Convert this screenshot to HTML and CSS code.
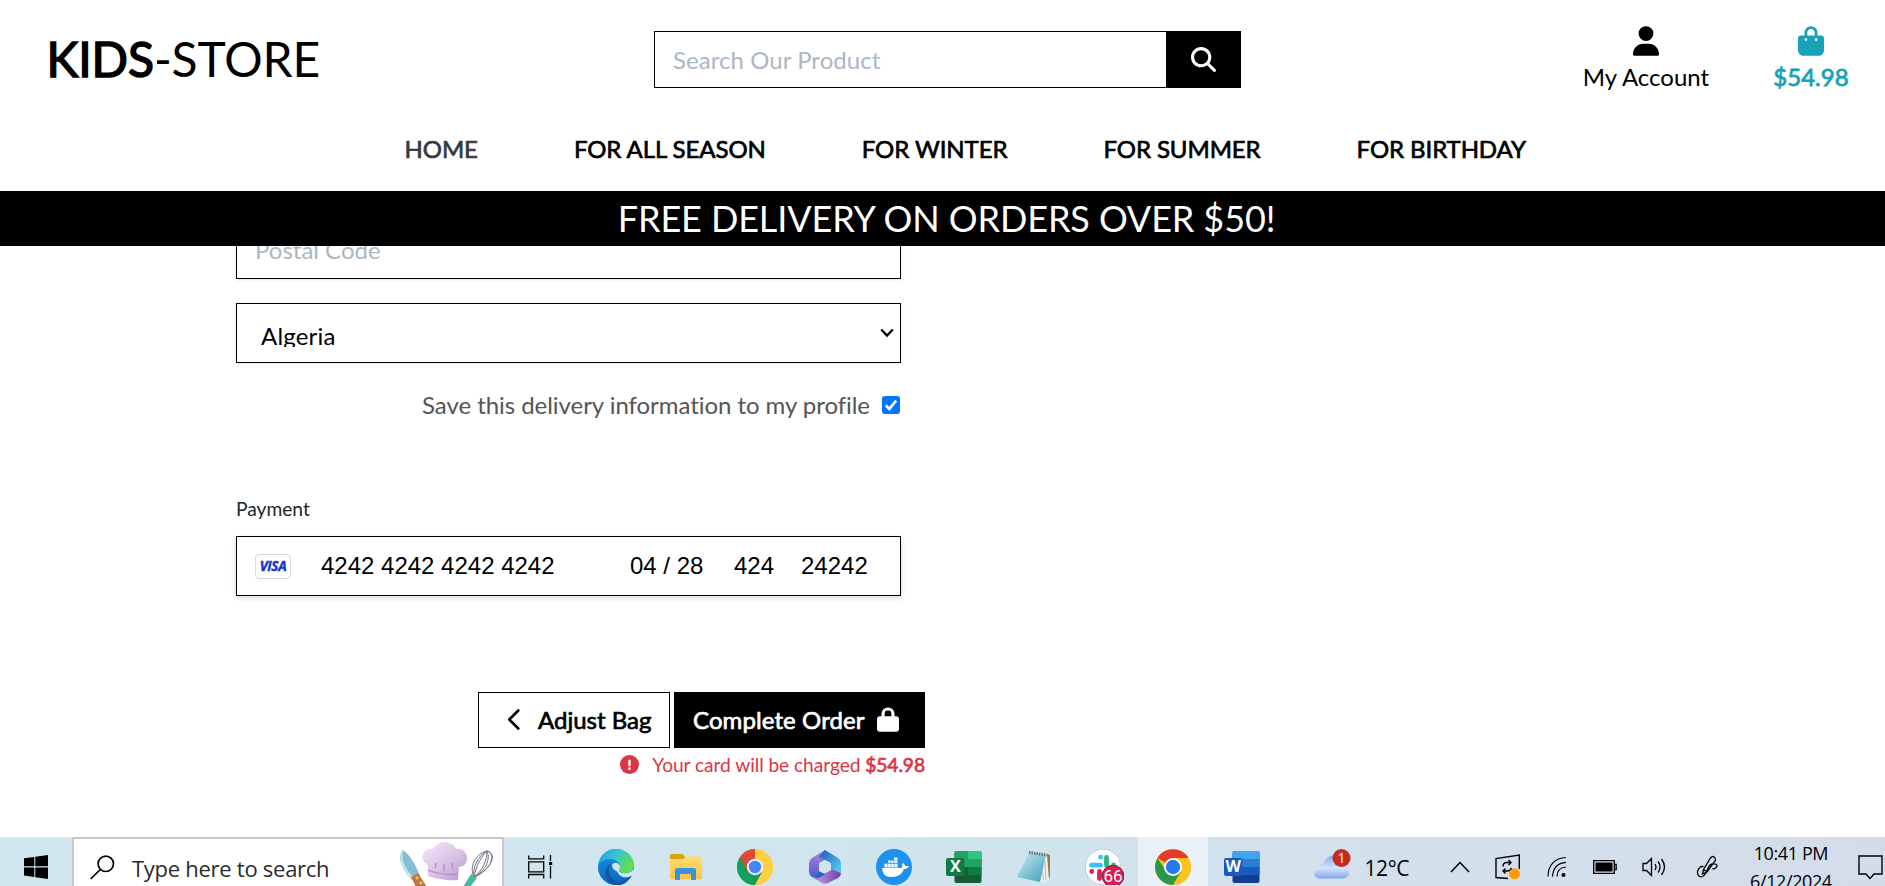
FILE: index.html
```html
<!DOCTYPE html>
<html lang="en">
<head>
<meta charset="utf-8">
<title>KIDS-STORE Checkout</title>
<link rel="stylesheet" href="styles.css">
</head>
<body>
<svg class="defs" width="0" height="0" aria-hidden="true">
  <defs>
    <linearGradient id="edgeTop" x1="0" y1="0" x2="1" y2="0.4"><stop offset="0" stop-color="#1b9de2"/><stop offset=".5" stop-color="#35c3dc"/><stop offset="1" stop-color="#62dd4f"/></linearGradient>
    <linearGradient id="edgeLow" x1="0" y1="0" x2="0" y2="1"><stop offset="0" stop-color="#1596e3"/><stop offset="1" stop-color="#0a64bd"/></linearGradient>
    <linearGradient id="folder" x1="0" y1="0" x2="0" y2="1"><stop offset="0" stop-color="#ffdc6e"/><stop offset="1" stop-color="#fbc546"/></linearGradient>
    <linearGradient id="mA" x1="0" y1="0" x2="0" y2="1"><stop offset="0" stop-color="#ae7fe0"/><stop offset="1" stop-color="#4a5cc4"/></linearGradient>
    <linearGradient id="mB" x1="0" y1="0" x2="1" y2="1"><stop offset="0" stop-color="#2458b4"/><stop offset="1" stop-color="#54d6f8"/></linearGradient>
    <linearGradient id="mC" x1="0" y1="0" x2="1" y2="0"><stop offset="0" stop-color="#d09bf4"/><stop offset="1" stop-color="#7044a0"/></linearGradient>
    <linearGradient id="note" x1="0" y1="0" x2="1" y2="1"><stop offset="0" stop-color="#c9edf3"/><stop offset="1" stop-color="#3f9fb5"/></linearGradient>
    <linearGradient id="hat" x1="0" y1="0" x2="1" y2="1"><stop offset="0" stop-color="#f3e8f8"/><stop offset=".55" stop-color="#d9c2e6"/><stop offset="1" stop-color="#b794cc"/></linearGradient>
    <linearGradient id="cloud" x1="0" y1="0" x2="0" y2="1"><stop offset="0" stop-color="#86acef"/><stop offset=".55" stop-color="#d2e4fb"/><stop offset="1" stop-color="#7fa5ec"/></linearGradient>
  </defs>
</svg>

<div class="page">
  <header class="header">
    <div class="top-row">
      <a class="brand"><span class="strong">KIDS</span>-STORE</a>
      <form class="search">
        <div class="search-input"><span>Search Our Product</span></div>
        <div class="search-button">
          <svg width="25" height="25" viewBox="0 0 512 512"><path fill="#fff" d="M416 208c0 45.900-14.900 88.300-40 122.700L502.600 457.400c12.500 12.500 12.500 32.800 0 45.300s-32.800 12.500-45.300 0L330.700 376c-34.400 25.200-76.800 40-122.700 40C93.100 416 0 322.900 0 208S93.100 0 208 0s208 93.100 208 208zM208 352a144 144 0 1 0 0-288 144 144 0 1 0 0 288z"/></svg>
        </div>
      </form>
      <div class="account">
        <svg width="26" height="30" viewBox="0 0 448 512"><path d="M224 256A128 128 0 1 0 224 0a128 128 0 1 0 0 256zm-45.700 48C79.800 304 0 383.800 0 482.300 0 498.700 13.300 512 29.700 512h388.600c16.400 0 29.700-13.300 29.700-29.700C448 383.800 368.200 304 269.700 304z"/></svg>
        <span class="account-label">My Account</span>
      </div>
      <div class="bag">
        <svg width="26" height="30" viewBox="0 0 448 512"><path fill="#17a2b8" d="M160 112c0-35.300 28.700-64 64-64s64 28.700 64 64v48H160zm-48 48H48c-26.500 0-48 21.500-48 48v208c0 53 43 96 96 96h256c53 0 96-43 96-96V208c0-26.500-21.500-48-48-48h-64v-48C336 50.100 285.900 0 224 0S112 50.100 112 112zm24 48a24 24 0 1 1 0 48 24 24 0 1 1 0-48zm152 24a24 24 0 1 1 48 0 24 24 0 1 1-48 0z"/></svg>
        <span class="bag-total">$54.98</span>
      </div>
    </div>
    <nav class="nav">
      <a class="nav-link current">HOME</a>
      <a class="nav-link">FOR ALL SEASON</a>
      <a class="nav-link">FOR WINTER</a>
      <a class="nav-link">FOR SUMMER</a>
      <a class="nav-link">FOR BIRTHDAY</a>
    </nav>
  </header>
  <div class="banner"><span>FREE DELIVERY ON ORDERS OVER $50!</span></div>

  <main class="checkout">
    <div class="form">
      <div class="field postal"><span>Postal Code</span></div>
      <div class="field country">
        <span class="country-name">Algeria</span>
        <svg width="14" height="10" viewBox="0 0 14 10"><path d="M1.200 1.500 7 7.500l5.800-6" fill="none" stroke="#000" stroke-width="2.300"/></svg>
      </div>
      <div class="save">
        <span class="save-label">Save this delivery information to my profile</span>
        <svg width="18" height="18" viewBox="0 0 18 18"><rect width="18" height="18" rx="3" fill="#0075ff"/><path d="M3.800 9.300 7.300 12.900 14.200 4.600" fill="none" stroke="#fff" stroke-width="2.700"/></svg>
      </div>
      <div class="legend">Payment</div>
      <div class="field card">
        <div class="visa">VISA</div>
        <span class="card-number">4242 4242 4242 4242</span>
        <span class="card-expiry">04 / 28</span>
        <span class="card-cvc">424</span>
        <span class="card-zip">24242</span>
      </div>
    </div>
    <div class="actions">
      <div class="buttons">
        <a class="btn btn-light">
          <svg width="13" height="21" viewBox="0 0 13 21"><path d="M11.300 1.500 2.300 10.500l9 9" fill="none" stroke="#000" stroke-width="2.600" stroke-linecap="round" stroke-linejoin="round"/></svg>
          <span class="adjust-label">Adjust Bag</span>
        </a>
        <a class="btn btn-dark">
          <span class="complete-label">Complete Order</span>
          <svg width="22" height="25" viewBox="0 0 22 25"><path d="M6 10V7a5 5 0 0 1 10 0v3" fill="none" stroke="#fff" stroke-width="3.200"/><rect y="9.200" width="22" height="15.600" rx="3" fill="#fff"/></svg>
        </a>
      </div>
      <div class="charge">
        <svg width="19" height="19" viewBox="0 0 19 19"><circle cx="9.500" cy="9.500" r="9.500" fill="#dc3545"/><path d="M9.500 5.800v4.200" stroke="#fff" stroke-width="2.400" stroke-linecap="round"/><circle cx="9.500" cy="13.700" r="1.350" fill="#fff"/></svg>
        <span class="charge-text">Your card will be charged <span class="strong-sm">$54.98</span></span>
      </div>
    </div>
  </main>

  <footer class="taskbar">
    <div class="start">
      <svg width="24" height="24" viewBox="0 0 24 24"><path d="M0 3.300 10.300 1.900v9.400H0zM11.300 1.700 24 0v11.300H11.300zM0 12.400h10.300v9.500L0 20.500zM11.300 12.400H24V24l-12.700-1.800z"/></svg>
    </div>
    <div class="task-search">
      <svg class="lens" width="25" height="25" viewBox="0 0 25 25"><circle cx="15.800" cy="8.800" r="7.700" fill="none" stroke="#000" stroke-width="1.700"/><path d="M10.300 14.500.7 24" stroke="#000" stroke-width="1.700"/></svg>
      <span class="task-search-text">Type here to search</span>
      <svg class="art" width="98" height="46" viewBox="0 0 98 46">
        <path d="M7 9c6 4 12 13 17 26l-8 4C7 29 0 17 7 9z" fill="#86bfd4"/><path d="M7 9C2 16 4 27 15 38l3-1C8 27 5 18 7 9z" fill="#c0e6f0"/>
        <path d="m15 36 7-4 9 14H20z" fill="#bd7849"/><circle cx="21" cy="37" r="1.400" fill="#f5c84c"/><circle cx="25" cy="42" r="1.400" fill="#f5c84c"/>
        <path d="M32 29c0-2 0-4-1-6-5-2-6-8-3-12 2-3 6-4 9-3 4-9 20-9 23 0 7-1 11 4 11 9 0 6-4 9-8 9l-1 13c-10 1-21-1-30-4z" fill="url(#hat)"/>
        <path d="M32 29c9 4 18 5 30 4M40 22l-1 5m9-4v7m8-8 1 6" fill="none" stroke="#b18cc8" stroke-width="1.300"/>
        <g fill="none" stroke="#77727f" stroke-width="1"><path d="M78 36c-5-10 1-23 13-26 8 1 7 18-13 26z"/><path d="M78 36c-2-10 5-22 13-26 4 9-2 20-13 26z"/><path d="M78 36c2-11 7-20 13-26 0 10-5 20-13 26zM78 36C84 34 99 23 96 14q-2-4-5-4"/></g>
        <path d="m75 33 6 4-7 9h-7z" fill="#4bb8a4"/>
      </svg>
    </div>
    <div class="task-view">
      <svg width="25" height="24" viewBox="0 0 25 24" fill="none" stroke="#000" stroke-width="1.300"><path d="M.7.500v3.400h15V.500M.7 6.900h15v10H.7zM.7 23.500v-4h15v4M22.500 0v6M22.500 11v12.500"/><path d="M21 7h3.200v3H21z" fill="#000" stroke="none"/></svg>
    </div>
    <div class="apps">
      <div class="app">
        <svg width="36" height="36" viewBox="0 0 36 36"><circle cx="18" cy="18" r="18" fill="url(#edgeLow)"/><path d="M22 23c4 2 9 2 14-3v5l-3 2c-5 3-13 1-14-6z" fill="#d2e6ef"/><path d="M0 17C2 6 9 0 18 0c11 0 18 8 18 16 0 7-8 10-14 7-2-1 0-2 0-5 0-5-5-8-10-8-6 0-10 3-12 7z" fill="url(#edgeTop)"/><path d="M14 14c-5 5-4 13 2 17 6 3 13 0 17-4-5 11-16 11-22 6-6-6-4-15 3-19z" fill="#0f56a4"/><path d="M22 23c-4 0-8-3-8-7 2-4 8-2 8 2 0 3-2 4 0 5z" fill="#d2e6ef"/></svg>
      </div>
      <div class="app">
        <svg width="32" height="36" viewBox="0 0 32 36"><path d="M0 6.500Q0 5 1.500 5h11L15 8v4H0z" fill="#dea107"/><path d="M0 10h13l3-2.500h14.500Q32 7.500 32 9v19.500q0 1.500-1.500 1.500h-29Q0 30 0 28.500z" fill="url(#folder)"/><path d="M5 31V21q0-2 2-2h17q2 0 2 2v10h-5v-6H10v6z" fill="#3895dd"/></svg>
      </div>
      <div class="app">
        <svg width="36" height="36" viewBox="0 0 36 36"><circle cx="18" cy="18" r="18" fill="#ffce44"/><path d="M18 18V0A18 18 0 0 0 2.400 9z" fill="#db4a3c"/><path d="M2.400 9A18 18 0 0 0 18 36l7-13-15-1z" fill="#12a05b"/><path d="M18 18 11 27 2.400 9 18 9z" fill="#db4a3c"/><path d="M3 8.500 11 23l7 13A18 18 0 0 1 3 8.500z" fill="#12a05b"/><path d="M18 36a18 18 0 0 0 0-36v9l8 14z" fill="#ffce44"/><circle cx="18" cy="18" r="8.200" fill="#e9eff5"/><circle cx="18" cy="18" r="6.200" fill="#4885f4"/></svg>
      </div>
      <div class="app">
        <svg width="32" height="36" viewBox="0 0 32 36"><path d="M16 1 3 9Q0 11 0 14v9q0 3 3 5l5 3q3-4 2-9v-8l11-6V5z" fill="url(#mA)"/><path d="M12 5l4-4 13 8q3 2 3 5v10l-10-3v-7L10 8z" fill="url(#mB)"/><path d="M3 28q6 1 9-3l10-5 10 4q0 3-3 5l-10 5q-3 1-6 0z" fill="url(#mC)"/><path d="m10 22 6 3.500-7 4-6-2q6 0 7-5.500z" fill="#2164b8"/><path d="m16 12.200 6 3v6L16 24.500l-6-3.300v-6z" fill="#d2e4ee"/></svg>
      </div>
      <div class="app">
        <svg width="36" height="36" viewBox="0 0 36 36"><circle cx="18" cy="18" r="18" fill="#1d91ed"/><path d="M6 19h19q2-1 1-4l1-1q2 1 2 3h4q-1 3-5 3-3 8-12 8-9 1-10-9z" fill="#fff"/><path d="M8.500 14.500h13v4h-13zM12 11.500h9.500v2.500H12zM18 8.500h3.500V11H18z" fill="#fff"/><path d="M11.700 11v8m3.200-8v8m3.200-8v8M8 14.200h14" stroke="#1d91ed" stroke-width=".6"/></svg>
      </div>
      <div class="app">
        <svg width="36" height="36" viewBox="0 0 36 36"><rect x="8.500" y="2" width="27" height="32" rx="2" fill="#185c37"/><path d="M8.500 4q0-2 2-2H22v8H8.500zM8.500 10H22v8H8.500z" fill="#21a366"/><path d="M22 2h11.500q2 0 2 2v6H22z" fill="#33c481"/><path d="M22 10h13.500v8H22z" fill="#21a366"/><path d="M22 18h13.500v8H22z" fill="#107c41"/><rect y="9" width="18.500" height="18" rx="2" fill="#107c41"/><text x="9.300" y="23" class="office">X</text></svg>
      </div>
      <div class="app">
        <svg width="34" height="36" viewBox="0 0 34 36"><path d="m30 5 3 1v22l-4 5z" fill="#a0793e"/><path d="m12 4 18 2 2 25-5 3-8-3z" fill="#eef1f1"/><path d="m12 4 17 2-6 27L0 28z" fill="url(#note)"/><path d="M12 3.500 30 6" stroke="#68737a" stroke-width="3" stroke-dasharray="1.500 1"/><path d="m28 12 1 19M25 21l2 11" stroke="#b6bdbe"/></svg>
      </div>
      <div class="app">
        <svg width="42" height="36" viewBox="0 0 42 36"><circle cx="21" cy="18" r="17.700" fill="#fff" stroke="#b8c0c8" stroke-width=".7"/><g fill="none" stroke-width="4.800" stroke-linecap="round"><path d="M9.500 16.200h9M18.500 8.200h.1" stroke="#36c5f0"/><path d="M24.500 8.500v8M31.500 16h.1" stroke="#2eb67d"/><path d="M17.500 22.500v7M9.800 22.500h.1" stroke="#e01e5a"/></g><circle cx="31" cy="27" r="10.800" fill="#d61f50" stroke="#76233f" stroke-width="1"/><text x="31" y="32.500" class="count">66</text></svg>
      </div>
      <div class="app active">
        <svg width="36" height="36" viewBox="0 0 36 36"><circle cx="18" cy="18" r="18" fill="#fcc31c"/><path d="M18 18 2.500 9a18 18 0 0 1 31 0z" fill="#e33b2e"/><path d="M2.500 9A18 18 0 0 0 18 36l8-13-15-1z" fill="#2d9748"/><path d="M18 36A18 18 0 0 0 33.500 9H18l8 14z" fill="#fcc31c"/><circle cx="18" cy="18" r="9" fill="#fff"/><circle cx="18" cy="18" r="7.200" fill="#2979ed"/></svg>
      </div>
      <div class="app">
        <svg width="36" height="36" viewBox="0 0 36 36"><rect x="8.500" y="2" width="27" height="32" rx="2" fill="#103f91"/><path d="M8.500 4q0-2 2-2h23q2 0 2 2v6h-27z" fill="#41a5ee"/><path d="M8.500 10h27v8h-27z" fill="#2b7cd3"/><path d="M8.500 18h27v8h-27z" fill="#185abd"/><rect y="9" width="18.500" height="18" rx="2" fill="#185abd"/><text x="9.300" y="23" class="office">W</text></svg>
      </div>
    </div>
    <div class="tray">
      <div class="weather">
        <svg width="38" height="32" viewBox="0 0 38 32"><path d="M6 29.500c-7 0-8-9-1-11 1-3 3-4 5-4 2-10 17-11 20 0 8 3 7 15-2 15z" fill="url(#cloud)"/><circle cx="27.500" cy="9" r="9" fill="#c42b1c"/><text x="27.500" y="14" class="alert">1</text></svg>
        <span class="temp">12°C</span>
      </div>
      <div class="tray-cell"><svg width="20" height="12" viewBox="0 0 20 12"><path d="m1 11 9-9.500 9 9.500" fill="none" stroke="#000" stroke-width="1.500"/></svg></div>
      <div class="tray-cell"><svg width="26" height="26" viewBox="0 0 26 26"><g fill="none" stroke="#000" stroke-width="1.400"><path d="M13 24.500 1 23.500V4.500L24.300 1v14M8 12.500q0-4 4-4h4M13.500 6 16 8.500 13.500 11M16.500 14q-1 3-4.500 3H8M10.500 14.500 8 17l2.500 2.500"/></g><circle cx="19.500" cy="19.800" r="5.500" fill="#ff9908"/></svg></div>
      <div class="tray-cell"><svg width="20" height="22" viewBox="0 0 20 22"><g fill="none" stroke="#000" stroke-width="1.200"><path d="M1 20.500C1 9 8 2 19 1.500M5.500 20.500C6 12 10 7 19 6.300M10 20.500C10 15 13 11.500 19 11"/></g><circle cx="16.500" cy="19" r="2" /></svg></div>
      <div class="tray-cell"><svg width="24" height="14" viewBox="0 0 24 14"><path d="M.7.700h20.600v12.600H.7zM21.300 4.500h1.900v5h-1.900" fill="none" stroke="#000" stroke-width="1.300"/><path d="M2.500 2.500h17v9h-17z"/></svg></div>
      <div class="tray-cell"><svg width="24" height="20" viewBox="0 0 24 20" fill="none" stroke="#000" stroke-width="1.300"><path d="M1 6.500h3.500L9.500 1.500v17L4.500 13.500H1zM13 7q2 3 0 6M16 4.500q4 5.500 0 11M19.500 2q6 8 0 16"/></svg></div>
      <div class="tray-cell pen"><svg width="22" height="24" viewBox="0 0 22 24" fill="none" stroke="#000" stroke-width="1.300"><path d="m6.500 19 1-4.500L14.500 3q2.500-3 4.500 0 1 1.500 0 3l-8 11zM7.500 14.500l3.500 2.500M7.500 11.500H5q-4 3-3.500 7 1.500 4.500 5 3 3-1.500 5-7t5-5.500q4-.5 4.500 1.500 0 3-4.500 3.500"/></svg></div>
      <div class="clock"><span class="time">10:41 PM</span><span class="date">6/12/2024</span></div>
      <div class="notify"><svg width="25" height="25" viewBox="0 0 25 25"><path d="M1 1h23v18h-8l-4 4.500-4-4.500H1z" fill="none" stroke="#000" stroke-width="1.400"/></svg></div>
    </div>
  </footer>
</div>
</body>
</html>
```
FILE: styles.css
```css
* { box-sizing: border-box; }
body { margin: 0; background: #fff; color: #000; font-family: Lato, "Liberation Sans", sans-serif; font-size: 24px; }
svg { display: block; flex: none; }
.defs { position: absolute; }
.page { width: 1885px; height: 886px; overflow: hidden; display: flex; flex-direction: column; white-space: nowrap; }

.header { flex: none; height: 191px; }
.top-row { display: flex; height: 119px; }
.brand { width: 654px; padding-left: 46.500px; padding-top: 30px; font-size: 48px; line-height: 58px; letter-spacing: -.1px; }
.strong { -webkit-text-stroke: 1.500px currentColor; }
.search { display: flex; width: 587px; height: 57px; margin-top: 31px; }
.search-input { width: 513px; border: 1px solid #000; padding-left: 18px; line-height: 56px; color: #aab7c4; letter-spacing: .05px; }
.search-button { width: 74px; background: #000; display: flex; align-items: center; justify-content: center; padding-right: 1px; }
.account, .bag { display: flex; flex-direction: column; align-items: center; padding-top: 26px; }
.account { width: 126px; margin-left: 342px; }
.account-label, .bag-total { line-height: 28px; margin-top: 7px; }
.bag { width: 76px; margin-left: 64px; color: #17a2b8; }
.bag-total { -webkit-text-stroke: .8px currentColor; }
.nav { display: flex; gap: 96px; padding-left: 404.500px; line-height: 60px; letter-spacing: -.08px; -webkit-text-stroke: .7px currentColor; }
.current { color: #343a40; }
.banner { flex: none; height: 55px; background: #000; color: #fff; font-size: 36px; line-height: 55px; letter-spacing: -.11px; text-align: center; padding-left: 8px; }

.checkout { height: 591px; overflow: hidden; }
.form { width: 665px; margin-left: 236px; }
.field { display: flex; height: 60px; border: 1px solid #000; box-shadow: 0 1px 4px rgba(170, 183, 196, .3); }
.postal { margin-top: -27px; padding-left: 18px; line-height: 59px; color: #aab7c4; }
.country { margin-top: 24px; padding: 0 6px 0 24px; align-items: center; justify-content: space-between; }
.country-name { line-height: 26px; height: 24px; margin-top: 3px; overflow: hidden; letter-spacing: .2px; }
.save { display: flex; justify-content: flex-end; align-items: center; gap: 12px; height: 30px; margin-top: 26.500px; padding-right: 1px; color: #555; letter-spacing: -.05px; }
.save-label { margin-top: -1px; }
.legend { margin-top: 77.500px; font-size: 19.200px; line-height: 24px; color: #212529; height: 39px; }
.card { align-items: center; font-family: "Liberation Sans", sans-serif; font-size: 24px; box-shadow: 0 2px 5px rgba(140, 160, 180, .4); }
.visa { width: 36px; height: 25px; margin-left: 18px; border: 1px solid #d9d9d9; border-radius: 4px; color: #1434cb; font: italic bold 13.500px/23px "Open Sans", sans-serif; text-align: center; letter-spacing: -.3px; -webkit-text-stroke: .4px #1434cb; }
.card-number { width: 309px; margin-left: 30px; }
.card-expiry { width: 104px; }
.card-cvc { width: 67px; }
.actions { width: 447px; margin: 96px 0 0 478px; }
.buttons { display: flex; gap: 4px; }
.btn { height: 56px; display: flex; align-items: center; border: 1px solid #000; padding-bottom: 1px; -webkit-text-stroke: .7px currentColor; }
.btn-light { width: 192px; padding-left: 28px; gap: 18px; }
.btn-dark { width: 251px; padding-left: 18px; gap: 12px; background: #000; color: #fff; }
.complete-label { letter-spacing: .1px; }
.charge { display: flex; justify-content: flex-end; align-items: center; gap: 13px; height: 33px; font-size: 19.200px; color: #dc3545; letter-spacing: -.07px; }
.strong-sm { -webkit-text-stroke: .7px currentColor; }

.taskbar { display: flex; flex: none; height: 49px; overflow: hidden; background: linear-gradient(90deg, #d0e6ee 0, #d0e5ee 45%, #d3e1ec 70%, #d4dcea 100%); font-family: "Open Sans", "Noto Sans", sans-serif; }
.start { width: 72px; padding: 18px 0 0 24px; }
.task-search { display: flex; width: 432px; border: 2px solid #c8c8c8; border-bottom: 0; background: #fff; color: #2b2b2b; }
.lens { margin: 16px 0 0 16px; }
.task-search-text { width: 264px; margin: 12px 0 0 17px; font-size: 22px; line-height: 34px; letter-spacing: -.27px; }
.art { margin-top: 2px; }
.task-view { width: 77.200px; padding: 18px 0 0 24px; }
.apps { display: flex; }
.app { width: 69.600px; height: 49px; display: flex; justify-content: center; padding-top: 12px; }
.active { background: #eaf1f8; }
.office { font: bold 16px "Open Sans", sans-serif; fill: #fff; text-anchor: middle; }
.count { font: 17px Roboto, sans-serif; fill: #fff; text-anchor: middle; }
.alert { font: 14px "Open Sans", sans-serif; fill: #fff; text-anchor: middle; }
.tray { display: flex; margin-left: 37.300px; }
.weather { display: flex; width: 121px; padding-top: 12px; }
.temp { margin-left: 12px; font-size: 21px; line-height: 38px; letter-spacing: -.4px; }
.tray-cell { width: 48.500px; height: 49px; padding-top: 10px; display: flex; align-items: center; justify-content: center; }
.pen { width: 58px; }
.clock { width: 110px; padding-top: 2px; font-size: 18px; line-height: 28px; letter-spacing: -.4px; display: flex; flex-direction: column; align-items: center; }
.notify { padding: 18px 0 0 12px; }
```
